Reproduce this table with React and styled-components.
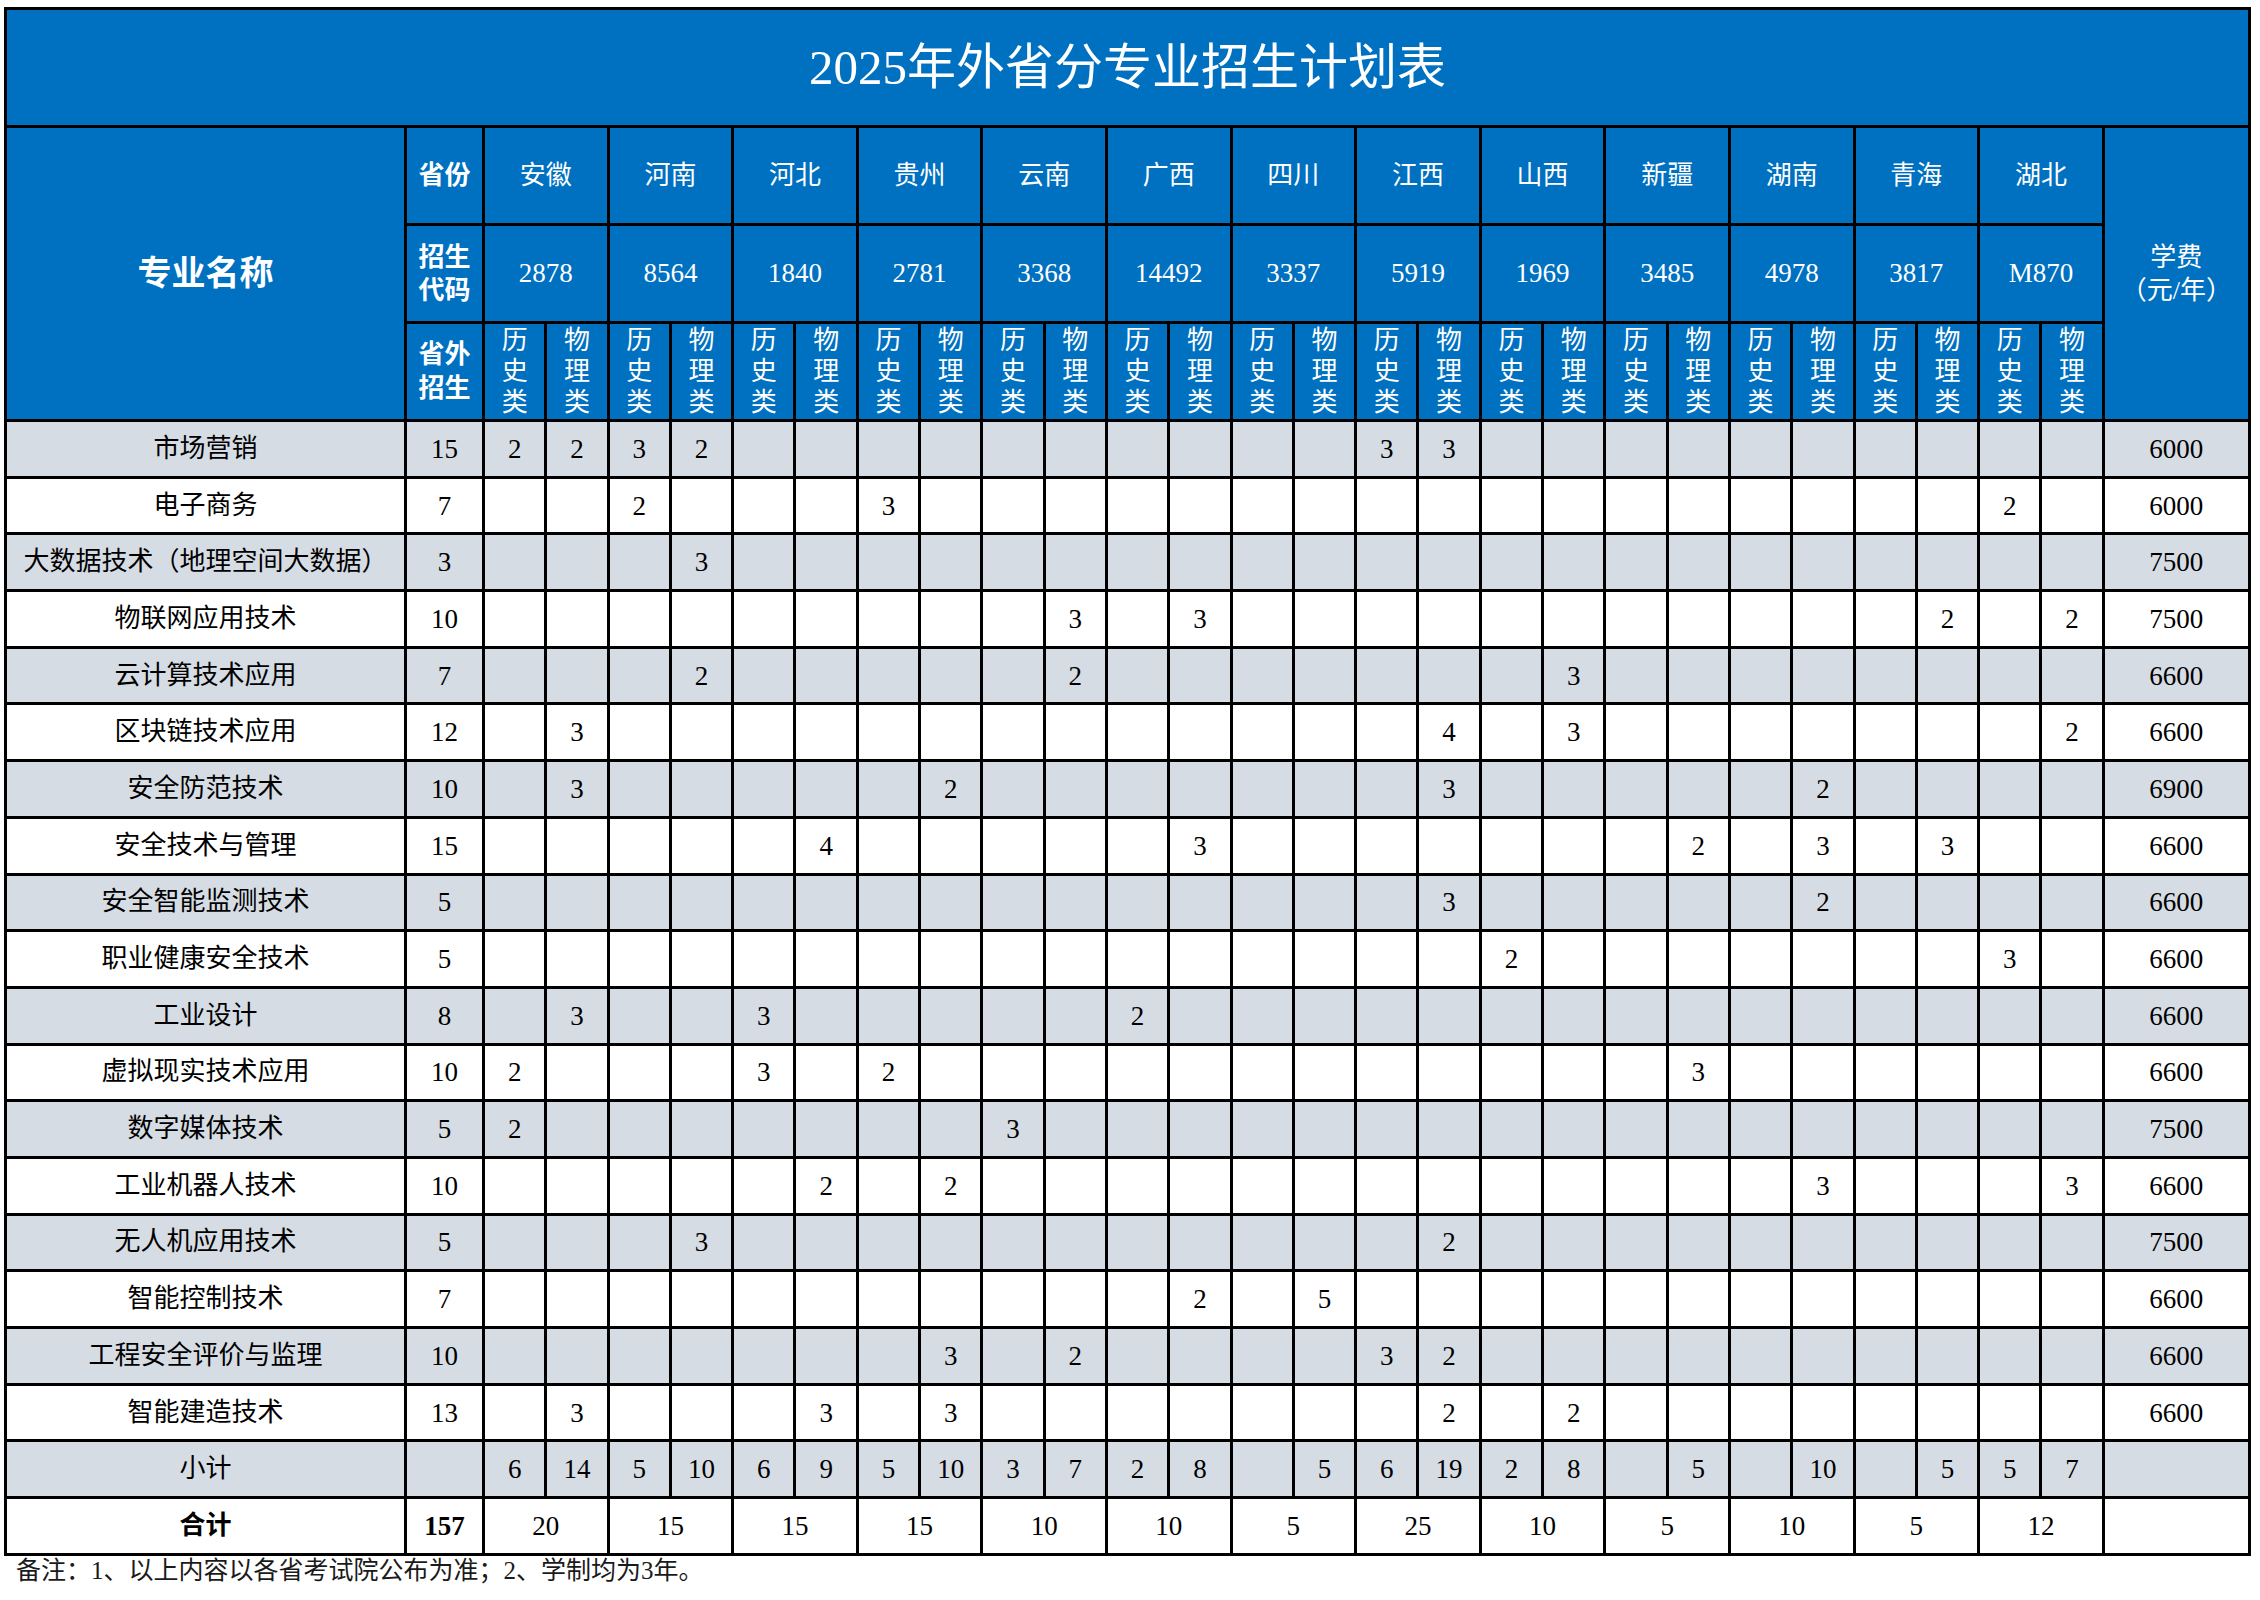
import React from "react";
import styled, { createGlobalStyle } from "styled-components";

const GlobalStyle = createGlobalStyle`
  html, body {
    margin: 0;
    padding: 0;
    background: #fff;
  }
  body {
    font-family: "Liberation Serif", "Noto Sans CJK SC", serif;
    color: #000;
  }
`;

const BLUE = "#0070C0";
const GRAY = "#D6DCE4";

const provinces = [
  { name: "安徽", code: "2878" },
  { name: "河南", code: "8564" },
  { name: "河北", code: "1840" },
  { name: "贵州", code: "2781" },
  { name: "云南", code: "3368" },
  { name: "广西", code: "14492" },
  { name: "四川", code: "3337" },
  { name: "江西", code: "5919" },
  { name: "山西", code: "1969" },
  { name: "新疆", code: "3485" },
  { name: "湖南", code: "4978" },
  { name: "青海", code: "3817" },
  { name: "湖北", code: "M870" },
];

// plan: index of sub column (province * 2 + 0 history / 1 physics) -> count
const majors = [
  { name: "市场营销", total: 15, fee: 6000, plan: { 0: 2, 1: 2, 2: 3, 3: 2, 14: 3, 15: 3 } },
  { name: "电子商务", total: 7, fee: 6000, plan: { 2: 2, 6: 3, 24: 2 } },
  { name: "大数据技术（地理空间大数据）", total: 3, fee: 7500, plan: { 3: 3 } },
  { name: "物联网应用技术", total: 10, fee: 7500, plan: { 9: 3, 11: 3, 23: 2, 25: 2 } },
  { name: "云计算技术应用", total: 7, fee: 6600, plan: { 3: 2, 9: 2, 17: 3 } },
  { name: "区块链技术应用", total: 12, fee: 6600, plan: { 1: 3, 15: 4, 17: 3, 25: 2 } },
  { name: "安全防范技术", total: 10, fee: 6900, plan: { 1: 3, 7: 2, 15: 3, 21: 2 } },
  { name: "安全技术与管理", total: 15, fee: 6600, plan: { 5: 4, 11: 3, 19: 2, 21: 3, 23: 3 } },
  { name: "安全智能监测技术", total: 5, fee: 6600, plan: { 15: 3, 21: 2 } },
  { name: "职业健康安全技术", total: 5, fee: 6600, plan: { 16: 2, 24: 3 } },
  { name: "工业设计", total: 8, fee: 6600, plan: { 1: 3, 4: 3, 10: 2 } },
  { name: "虚拟现实技术应用", total: 10, fee: 6600, plan: { 0: 2, 4: 3, 6: 2, 19: 3 } },
  { name: "数字媒体技术", total: 5, fee: 7500, plan: { 0: 2, 8: 3 } },
  { name: "工业机器人技术", total: 10, fee: 6600, plan: { 5: 2, 7: 2, 21: 3, 25: 3 } },
  { name: "无人机应用技术", total: 5, fee: 7500, plan: { 3: 3, 15: 2 } },
  { name: "智能控制技术", total: 7, fee: 6600, plan: { 11: 2, 13: 5 } },
  { name: "工程安全评价与监理", total: 10, fee: 6600, plan: { 7: 3, 9: 2, 14: 3, 15: 2 } },
  { name: "智能建造技术", total: 13, fee: 6600, plan: { 1: 3, 5: 3, 7: 3, 15: 2, 17: 2 } },
];

const SUB = provinces.length * 2;
const subIdx = Array.from({ length: SUB }, (_, i) => i);

const subtotals = subIdx.map((i) =>
  majors.reduce((s, m) => s + (m.plan[i] || 0), 0)
);
const groupTotals = provinces.map((_, p) => subtotals[p * 2] + subtotals[p * 2 + 1]);
const grandTotal = majors.reduce((s, m) => s + m.total, 0);

const Page = styled.div`
  padding: 7px 0 0 4px;
`;

const Sheet = styled.table`
  border-collapse: collapse;
  table-layout: fixed;
  width: 2246px;
  border: 3px solid #000;
`;

const Col = styled.col`
  width: ${(p) => p.$w}px;
`;

const Row = styled.tr`
  height: ${(p) => p.$h}px;
  background: ${(p) => (p.$shade ? GRAY : "#fff")};
`;

const TitleCell = styled.th`
  background: ${BLUE};
  color: #fff;
  border: 3px solid #000;
  padding: 0;
  font-size: 49px;
  font-weight: 400;
  line-height: 56px;
  text-align: center;
  vertical-align: middle;
`;

const HeadCell = styled.th`
  background: ${BLUE};
  color: #fff;
  border: 3px solid #000;
  padding: 0;
  font-size: ${(p) => p.$size || 26}px;
  font-weight: ${(p) => (p.$bold ? 700 : 400)};
  line-height: ${(p) => p.$lh || 32}px;
  text-align: center;
  vertical-align: middle;
  white-space: nowrap;
  overflow: hidden;
`;

const Code = styled.span`
  font-size: 27px;
`;

const Stack = styled.div`
  display: flex;
  flex-direction: column;
  align-items: center;
  line-height: ${(p) => p.$lh}px;
`;

const Cell = styled.td`
  border: 3px solid #000;
  padding: 0;
  font-size: ${(p) => (p.$num ? 27 : 26)}px;
  font-weight: ${(p) => (p.$bold ? 700 : 400)};
  line-height: 30px;
  text-align: center;
  vertical-align: middle;
  white-space: nowrap;
  overflow: hidden;
`;

const Note = styled.p`
  margin: 0 0 0 12px;
  font-size: 25px;
  line-height: 30px;
  color: #1a1a1a;
`;

const Lines = ({ text, lh }) => (
  <Stack $lh={lh}>
    {text.map((t) => (
      <span key={t}>{t}</span>
    ))}
  </Stack>
);

export default function App() {
  return (
    <>
      <GlobalStyle />
      <Page>
        <Sheet>
          <colgroup>
            <Col $w={400} />
            <Col $w={78} />
            {subIdx.map((i) => (
              <Col key={i} $w={62.3} />
            ))}
            <Col $w={146} />
          </colgroup>
          <thead>
            <tr style={{ height: 118 }}>
              <TitleCell colSpan={SUB + 3}>2025年外省分专业招生计划表</TitleCell>
            </tr>
            <tr style={{ height: 98 }}>
              <HeadCell rowSpan={3} $bold $size={34}>
                专业名称
              </HeadCell>
              <HeadCell $bold>省份</HeadCell>
              {provinces.map((p) => (
                <HeadCell key={p.name} colSpan={2}>
                  {p.name}
                </HeadCell>
              ))}
              <HeadCell rowSpan={3}>
                <Lines text={["学费", "（元/年）"]} lh={33} />
              </HeadCell>
            </tr>
            <tr style={{ height: 98 }}>
              <HeadCell $bold>
                <Lines text={["招生", "代码"]} lh={33} />
              </HeadCell>
              {provinces.map((p) => (
                <HeadCell key={p.name} colSpan={2}>
                  <Code>{p.code}</Code>
                </HeadCell>
              ))}
            </tr>
            <tr style={{ height: 98 }}>
              <HeadCell $bold>
                <Lines text={["省外", "招生"]} lh={34} />
              </HeadCell>
              {subIdx.map((i) => (
                <HeadCell key={i}>
                  <Lines text={i % 2 === 0 ? ["历", "史", "类"] : ["物", "理", "类"]} lh={31} />
                </HeadCell>
              ))}
            </tr>
          </thead>
          <tbody>
            {majors.map((m, r) => (
              <Row key={m.name} $h={56.7} $shade={r % 2 === 0}>
                <Cell>{m.name}</Cell>
                <Cell $num>{m.total}</Cell>
                {subIdx.map((i) => (
                  <Cell key={i} $num>
                    {m.plan[i] || ""}
                  </Cell>
                ))}
                <Cell $num>{m.fee}</Cell>
              </Row>
            ))}
            <Row $h={56.7} $shade>
              <Cell>小计</Cell>
              <Cell $num />
              {subIdx.map((i) => (
                <Cell key={i} $num>
                  {subtotals[i] || ""}
                </Cell>
              ))}
              <Cell $num />
            </Row>
            <Row $h={56.7}>
              <Cell $bold>合计</Cell>
              <Cell $num $bold>
                {grandTotal}
              </Cell>
              {groupTotals.map((t, p) => (
                <Cell key={p} $num colSpan={2}>
                  {t}
                </Cell>
              ))}
              <Cell $num />
            </Row>
          </tbody>
        </Sheet>
        <Note>备注：1、以上内容以各省考试院公布为准；2、学制均为3年。</Note>
      </Page>
    </>
  );
}
